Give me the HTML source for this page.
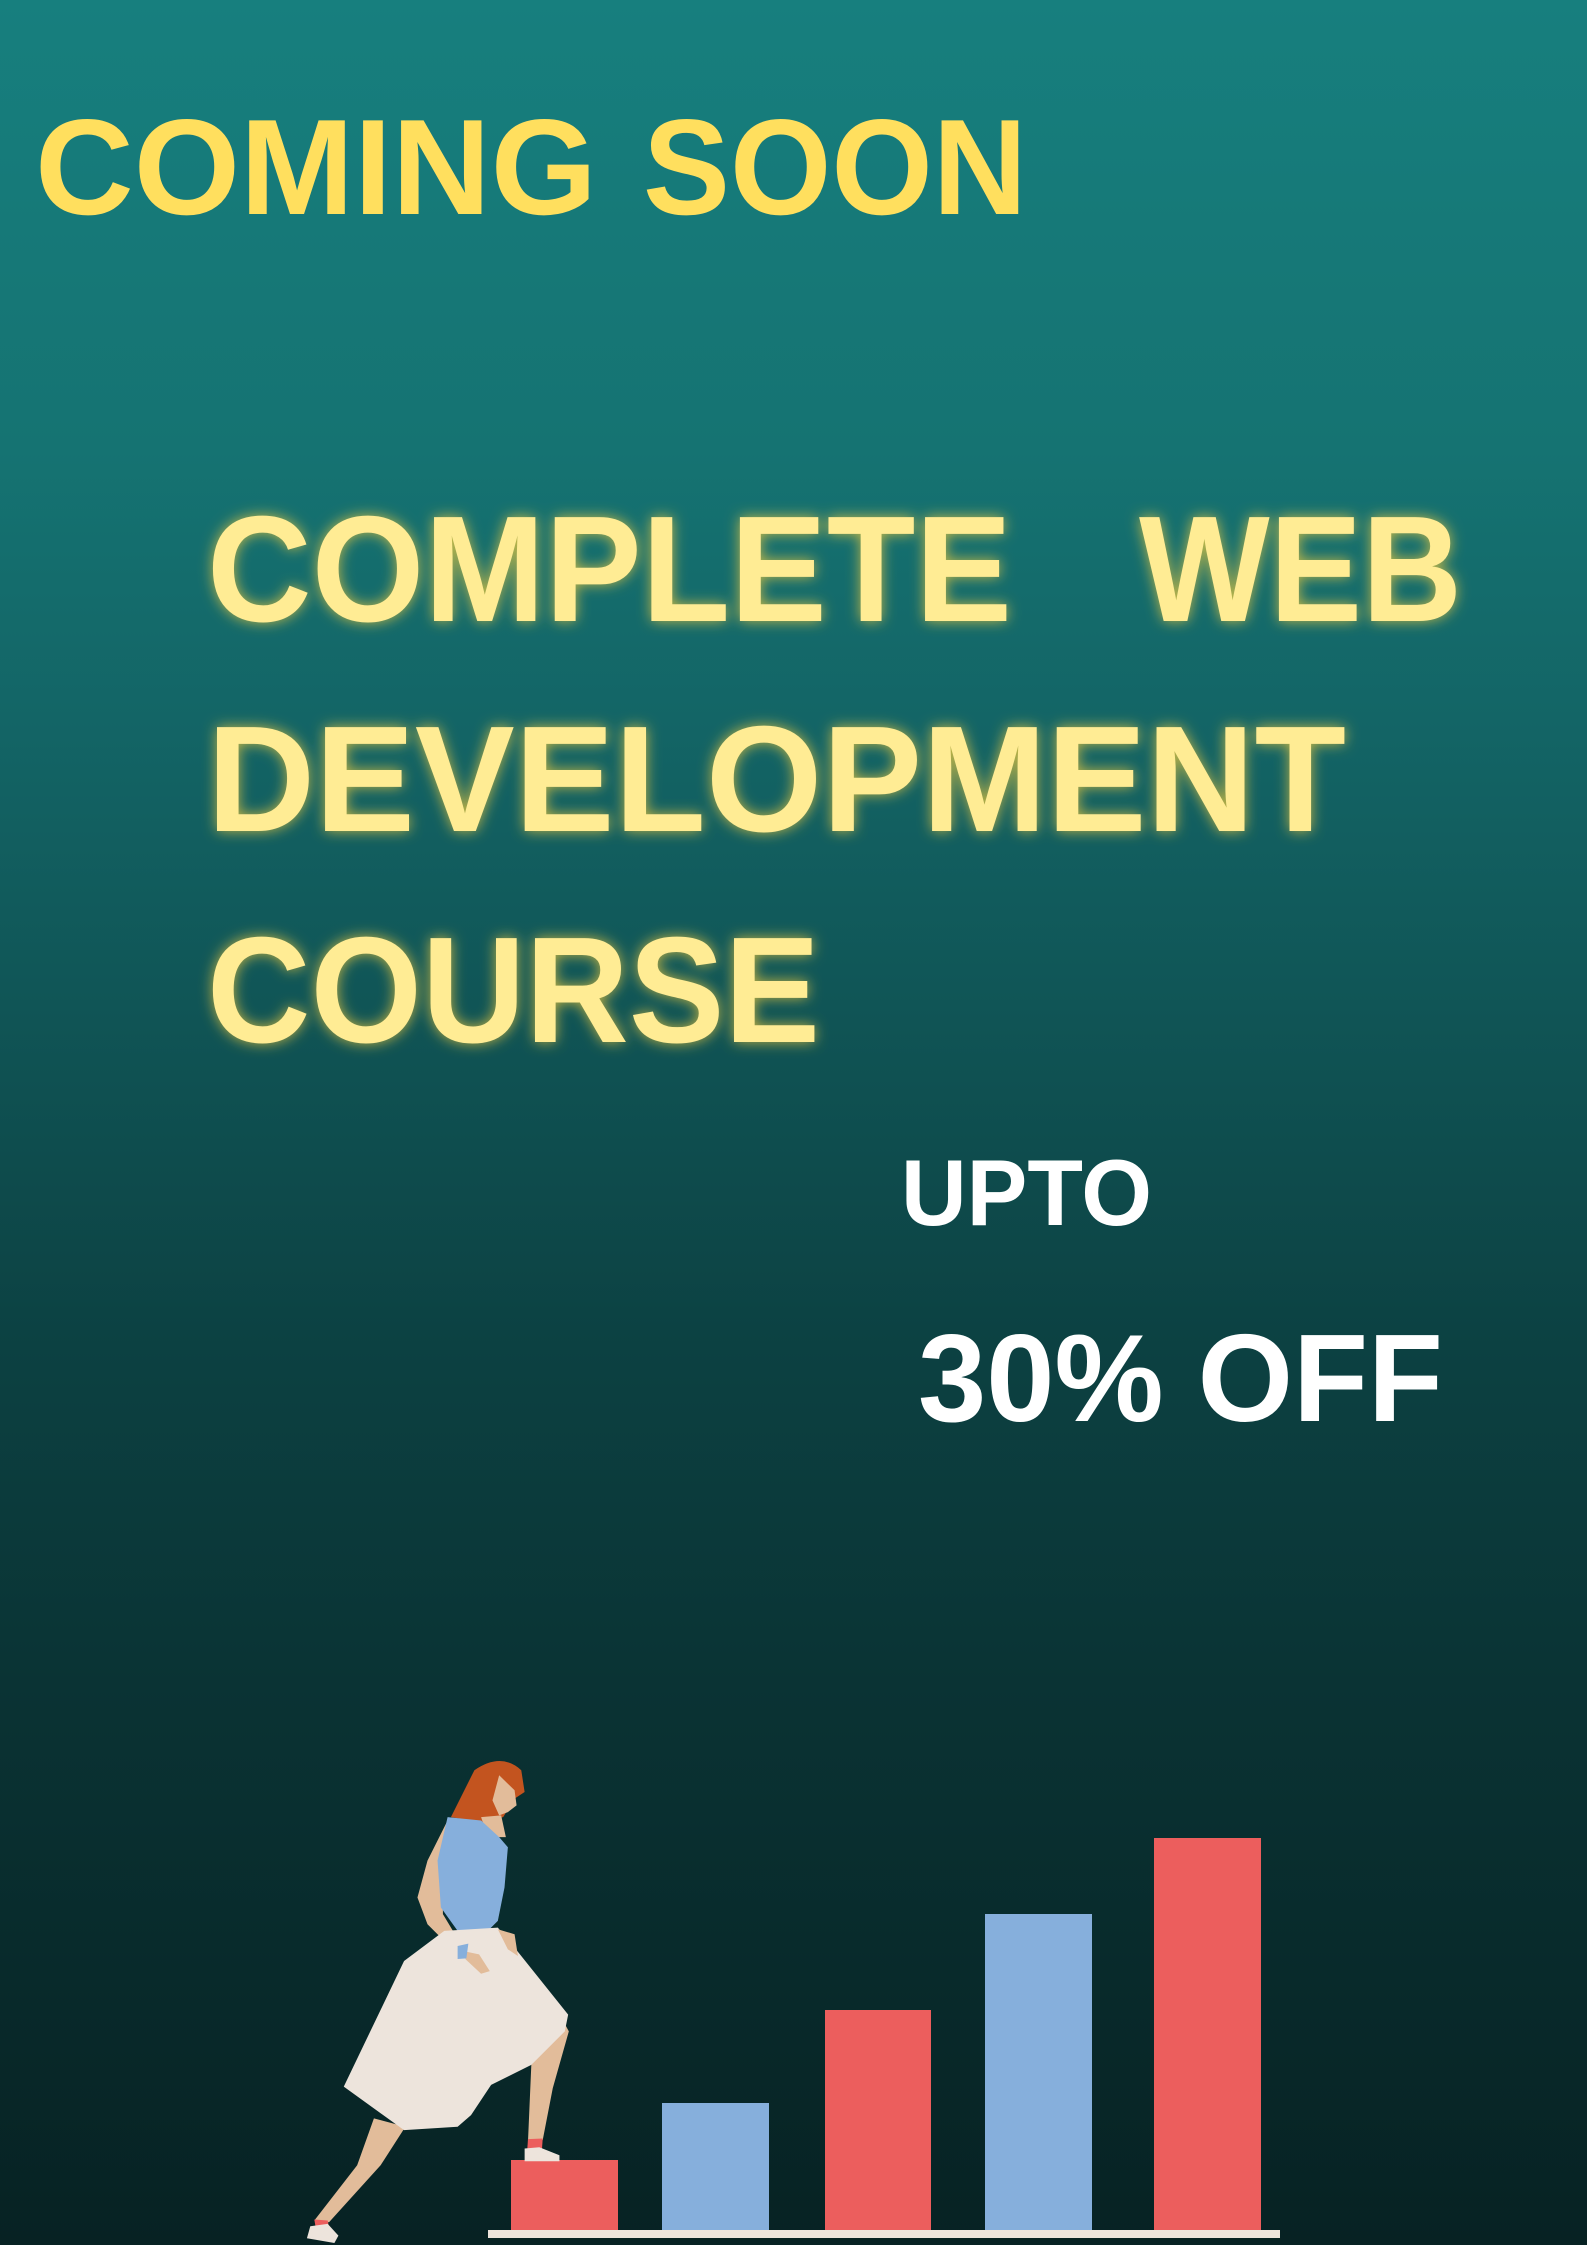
<!DOCTYPE html>
<html><head><meta charset="utf-8"><style>
html,body{margin:0;padding:0;}
body{width:1587px;height:2245px;overflow:hidden;background:linear-gradient(180deg,#177f7e 0%,#157372 20%,#136566 32%,#0f5152 48%,#0c4142 60%,#0a3334 75%,#082a2b 88%,#072223 100%);}
svg{position:absolute;left:0;top:0;}
</style></head><body>
<svg width="1587" height="2245" viewBox="0 0 1587 2245" xmlns="http://www.w3.org/2000/svg">
<defs>
<filter id="glow" x="-20%" y="-40%" width="140%" height="180%">
<feGaussianBlur in="SourceAlpha" stdDeviation="7" result="b"/>
<feFlood flood-color="#ffd23a" flood-opacity="0.75"/>
<feComposite in2="b" operator="in" result="g"/>
<feMerge><feMergeNode in="g"/><feMergeNode in="SourceGraphic"/></feMerge>
</filter>
</defs>
<g font-family="Liberation Sans, sans-serif" font-weight="bold">
<text x="35" y="214" font-size="136" fill="#ffdf5e" textLength="562" lengthAdjust="spacingAndGlyphs">COMING</text>
<text x="643" y="214" font-size="136" fill="#ffdf5e" textLength="384" lengthAdjust="spacingAndGlyphs">SOON</text>
<g fill="#ffec94" filter="url(#glow)" font-size="151">
<text x="207" y="621" textLength="805" lengthAdjust="spacingAndGlyphs">COMPLETE</text>
<text x="1139" y="621" textLength="323" lengthAdjust="spacingAndGlyphs">WEB</text>
<text x="207" y="831" textLength="1139" lengthAdjust="spacingAndGlyphs">DEVELOPMENT</text>
<text x="207" y="1042" textLength="613" lengthAdjust="spacingAndGlyphs">COURSE</text>
</g>
<text x="901" y="1225" font-size="94" fill="#ffffff" textLength="251" lengthAdjust="spacingAndGlyphs">UPTO</text>
<text x="918" y="1421" font-size="124" fill="#ffffff" textLength="525" lengthAdjust="spacingAndGlyphs">30% OFF</text>
</g>
<rect x="511" y="2160" width="107" height="72" fill="#ec5e5d"/>
<rect x="662" y="2103" width="107" height="129" fill="#86afdc"/>
<rect x="825" y="2010" width="106" height="222" fill="#ec5e5d"/>
<rect x="985" y="1914" width="107" height="318" fill="#86afdc"/>
<rect x="1154" y="1838" width="107" height="394" fill="#ec5e5d"/>
<rect x="488" y="2230" width="792" height="8" fill="#ede4dc"/>
<g transform="translate(250,1720) scale(0.6698,0.3348)">
<path d="M300,290 L335,150 Q375,95 405,150 L410,215 L395,235 L378,290 L345,305 Z" fill="#c3541f"/>
<path d="M372,165 L395,210 L398,255 L385,275 L372,285 L362,240 Z" fill="#e2bc9a"/>
<path d="M345,290 L375,285 L382,350 L355,350 Z" fill="#e2bc9a"/>
<path d="M295,300 L265,420 L250,530 L265,610 L300,680 L320,700 L345,750 L358,742 L342,700 L312,660 L288,580 L288,440 Z" fill="#e2bc9a"/>
<path d="M295,290 L345,300 L372,350 L385,380 L380,500 L370,600 L350,640 L310,630 L285,560 L280,420 Z" fill="#86afdc"/>
<path d="M185,1190 L232,1215 L195,1330 L118,1500 L96,1495 L160,1330 Z" fill="#e2bc9a"/>
<path d="M96,1492 L116,1495 L118,1515 L98,1515 Z" fill="#ec5e5d"/>
<path d="M90,1512 L116,1505 L132,1540 L126,1562 L85,1548 Z" fill="#ede4dc"/>
<path d="M468,900 L476,930 L452,1100 L437,1255 L415,1260 L420,1030 Z" fill="#e2bc9a"/>
<path d="M415,1252 L437,1250 L436,1280 L414,1282 Z" fill="#ec5e5d"/>
<path d="M410,1280 L432,1276 L462,1300 L462,1318 L410,1318 Z" fill="#ede4dc"/>
<path d="M290,630 L370,620 L395,680 L475,880 L470,930 L420,1030 L360,1090 L330,1180 L310,1215 L230,1225 L140,1095 L230,720 Z" fill="#ede4dc"/>
<path d="M370,625 L395,640 L400,705 L385,685 Z" fill="#e2bc9a"/>
<path d="M318,690 L342,700 L358,750 L345,758 L322,715 Z" fill="#e2bc9a"/>
<path d="M310,675 L326,668 L323,712 L310,714 Z" fill="#86afdc"/>
</g>
</svg>
</body></html>
